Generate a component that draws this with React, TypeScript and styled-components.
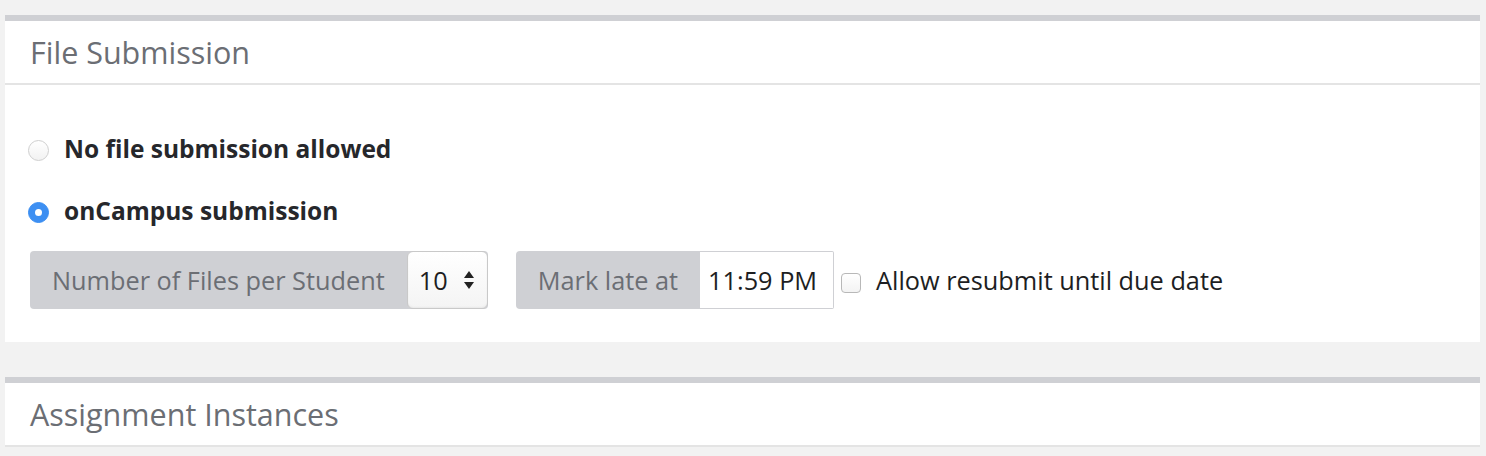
import styled, { createGlobalStyle } from 'styled-components';

const GlobalStyle = createGlobalStyle`
  body {
    margin: 0;
    background: #f2f2f2;
    font-family: "Open Sans", Lato, sans-serif;
  }
`;

const StyledPage = styled.div`
  display: flex;
  flex-direction: column;
  gap: 35px;
  padding: 15px 6px 0 5px;
`;

const StyledCard = styled.section`
  background: #fff;
  border-top: 6px solid #cfd0d4;
`;

const StyledCardHeader = styled.header`
  height: 62px;
  display: flex;
  align-items: center;
  padding: 0 25px;
  border-bottom: 2px solid #e4e4e4;
  font-size: 30.5px;
  color: #6b6e74;
`;

const StyledCardBody = styled.div`
  display: flex;
  flex-direction: column;
  padding: 48px 23px 33px 23px;
`;

const StyledRadioRow = styled.label`
  display: flex;
  align-items: center;
  gap: 15px;
  height: 30px;
  margin-bottom: 32px;
  font-size: 24.5px;
  font-weight: 700;
  color: #26272b;
`;

const StyledRadio = styled.span<{ $checked?: boolean }>`
  width: 21px;
  height: 21px;
  border-radius: 50%;
  box-sizing: border-box;
  margin-top: 4px;
  display: flex;
  align-items: center;
  justify-content: center;
  border: 1px solid ${({ $checked }) => ($checked ? '#3a8ef2' : '#cfcfcf')};
  background: ${({ $checked }) =>
    $checked ? '#3d8ff2' : 'linear-gradient(#fff, #f2f2f2)'};

  &::after {
    content: '';
    display: ${({ $checked }) => ($checked ? 'block' : 'none')};
    width: 7px;
    height: 7px;
    border-radius: 50%;
    background: #fff;
  }
`;

const StyledControls = styled.div`
  display: flex;
  align-items: center;
  margin-top: -6px;
  padding-left: 2px;
`;

const StyledGroup = styled.div`
  display: flex;
  height: 58px;
  border-radius: 4px;
  background: #cfd0d4;
  margin-right: 28px;
`;

const StyledAddon = styled.span`
  display: flex;
  align-items: center;
  padding: 0 22px;
  font-size: 25.3px;
  color: #6b6e74;
`;

const StyledSelect = styled.div`
  width: 81px;
  box-sizing: border-box;
  display: flex;
  align-items: center;
  justify-content: space-between;
  padding: 0 12px 0 11px;
  border: 1px solid #c9c9c9;
  border-radius: 6px;
  background: linear-gradient(#fff, #f4f4f4);
  box-shadow: inset 0 -1px 2px rgba(0, 0, 0, 0.05);
  font-size: 25.3px;
  color: #1d1e22;
`;

const StyledTimeInput = styled.div`
  width: 134px;
  box-sizing: border-box;
  display: flex;
  align-items: center;
  padding-left: 8px;
  border: 1px solid #cfd0d4;
  border-left: none;
  border-radius: 0 2px 2px 0;
  background: #fff;
  font-size: 25.3px;
  color: #1d1e22;
`;

const StyledCheckRow = styled.label`
  display: flex;
  align-items: center;
  gap: 15px;
  margin-left: -21px;
  font-size: 25.3px;
  color: #1d1e22;
`;

const StyledCheckbox = styled.span`
  width: 20px;
  height: 20px;
  box-sizing: border-box;
  margin-top: 5px;
  border: 1px solid #b8b8b8;
  border-radius: 4px;
  background: linear-gradient(#fff, #f3f3f3);
`;

const SortArrows = () => (
  <svg width="12" height="20" viewBox="0 0 12 20">
    <path d="M6 1 L11 8 H1 Z" fill="#222" />
    <path d="M6 19 L11 12 H1 Z" fill="#222" />
  </svg>
);

export default function App() {
  return (
    <>
      <GlobalStyle />
      <StyledPage>
        <StyledCard>
          <StyledCardHeader>File Submission</StyledCardHeader>
          <StyledCardBody>
            <StyledRadioRow>
              <StyledRadio />
              No file submission allowed
            </StyledRadioRow>
            <StyledRadioRow>
              <StyledRadio $checked />
              onCampus submission
            </StyledRadioRow>
            <StyledControls>
              <StyledGroup>
                <StyledAddon>Number of Files per Student</StyledAddon>
                <StyledSelect>
                  10
                  <SortArrows />
                </StyledSelect>
              </StyledGroup>
              <StyledGroup>
                <StyledAddon>Mark late at</StyledAddon>
                <StyledTimeInput>11:59 PM</StyledTimeInput>
              </StyledGroup>
              <StyledCheckRow>
                <StyledCheckbox />
                Allow resubmit until due date
              </StyledCheckRow>
            </StyledControls>
          </StyledCardBody>
        </StyledCard>
        <StyledCard>
          <StyledCardHeader>Assignment Instances</StyledCardHeader>
        </StyledCard>
      </StyledPage>
    </>
  );
}
